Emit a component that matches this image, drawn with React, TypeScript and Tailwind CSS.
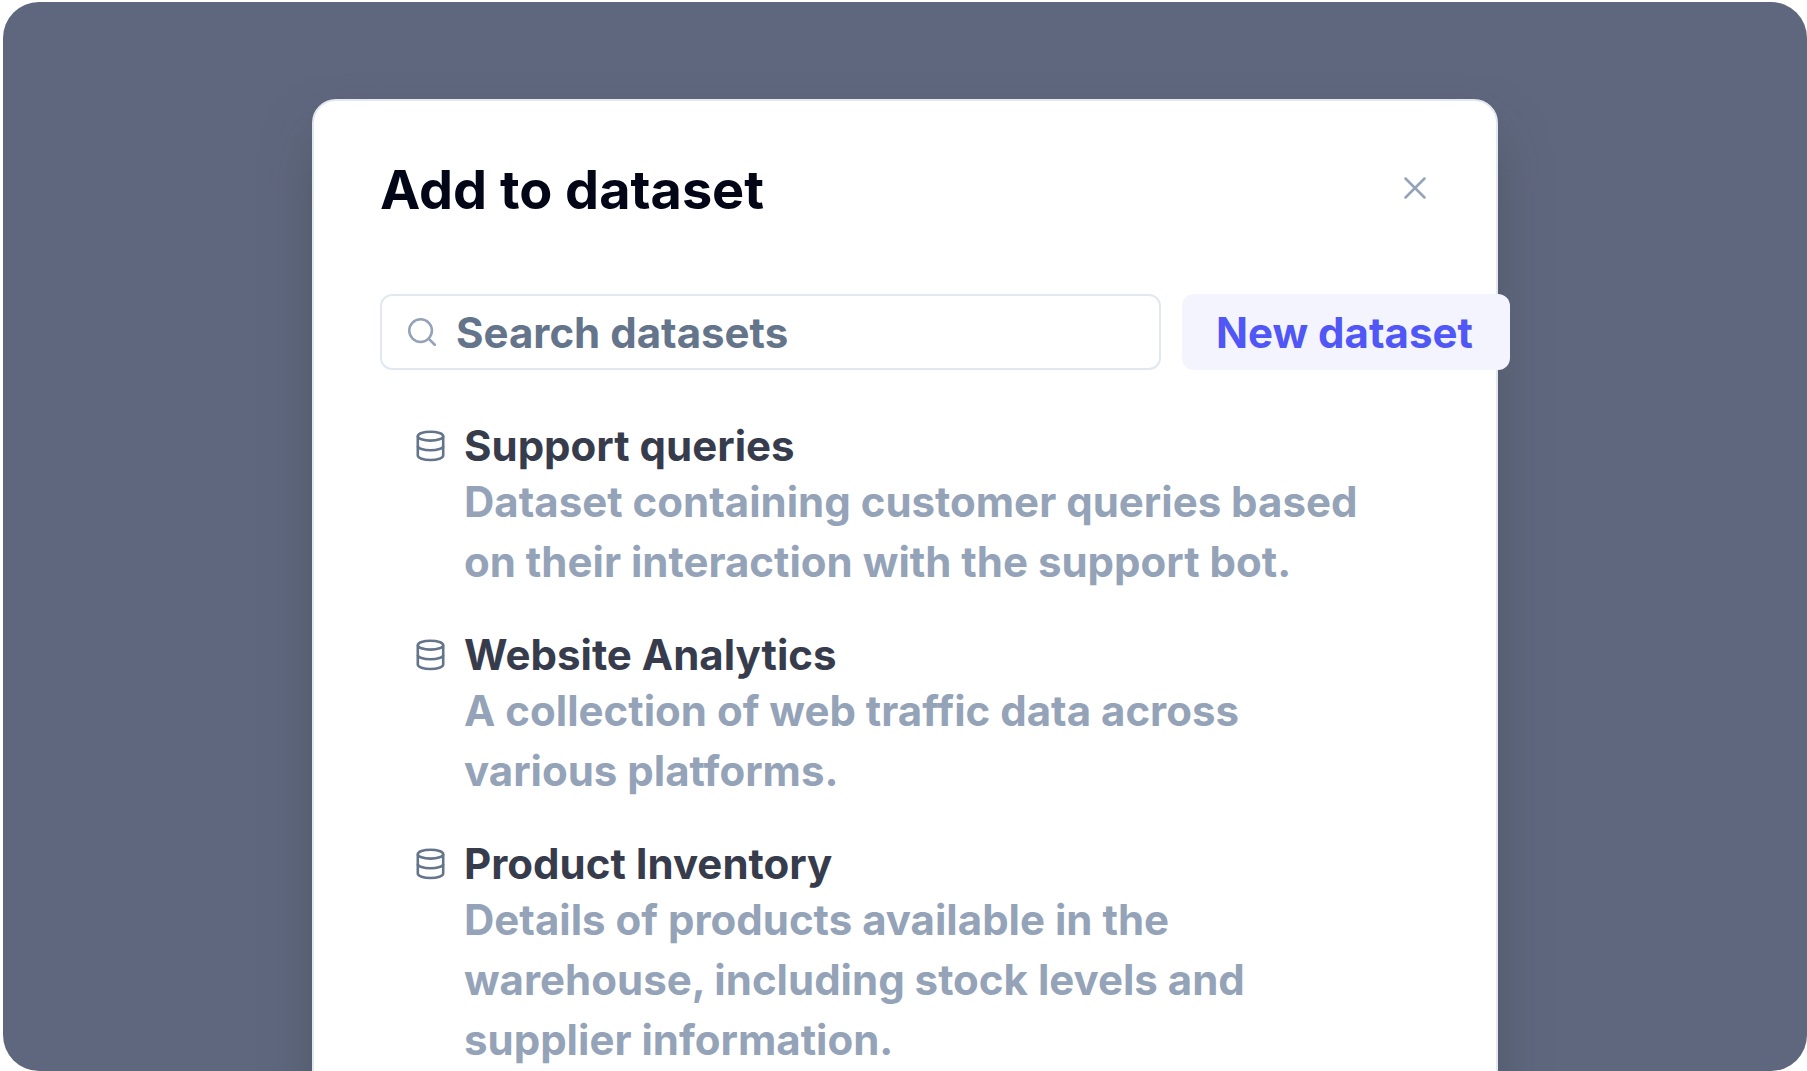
import React from "react";
import { Search, X } from "lucide-react";

const datasets = [
  { name: "Support queries", description: "Dataset containing customer queries based on their interaction with the support bot." },
  { name: "Website Analytics", description: "A collection of web traffic data across various platforms." },
  { name: "Product Inventory", description: "Details of products available in the warehouse, including stock levels and supplier information." },
];

function DatasetIcon() {
  return (
    <svg aria-hidden="true" viewBox="0 0 34 34" fill="none" stroke="currentColor" strokeWidth="2.6" className="mt-[9px] size-[34px] shrink-0 text-[#64748b]">
      <ellipse cx="16.5" cy="7.2" rx="12.7" ry="4.4" />
      <path d="M3.8 7.2v19.4c0 2.4 5.7 4.4 12.7 4.4s12.7-2 12.7-4.4V7.2" />
      <path d="M3.8 16.9c0 2.4 5.7 4.4 12.7 4.4s12.7-2 12.7-4.4" />
    </svg>
  );
}

export default function App() {
  return (
    <div className="h-screen overflow-hidden bg-white pt-0.5 pl-[3px] font-['Inter',sans-serif] [font-variant-ligatures:none]">
      <main className="flex h-full items-start justify-center overflow-hidden rounded-[36px] bg-[#5f677e] pt-[97px]">
        <section role="dialog" aria-labelledby="title" className="min-h-screen w-full max-w-[1186px] rounded-3xl border-2 border-[#e2e8f0] bg-white px-[66px] pt-14 shadow-[0_28px_56px_-12px_rgba(60,66,66,0.6)]">
          <header className="flex items-start justify-between">
            <h1 id="title" className="text-[54px] leading-[66px] font-bold text-[#020617]">Add to dataset</h1>
            <button type="button" aria-label="Close" className="mt-3 -mr-1 text-[#94a3b8]">
              <X size={38} strokeWidth={1.6} />
            </button>
          </header>
          <div className="mt-[71px] flex w-max gap-[21px]">
            <label className="flex h-[76px] w-[781px] items-center gap-[17px] rounded-xl border-2 border-[#e2e8f0] px-[23px]">
              <Search size={34} strokeWidth={1.8} className="text-[#94a3b8]" />
              <input aria-label="Search datasets" placeholder="Search datasets" className="min-w-0 flex-1 text-[42px] font-bold outline-none placeholder:text-[#64748b]" />
            </label>
            <button type="button" className="h-[76px] rounded-xl bg-[#f3f4fe] pr-[37px] pl-[34px] text-[42px] font-bold text-[#5156f6]">New dataset</button>
          </div>
          <ul className="mt-[50px] flex flex-col gap-[37px] pl-[34px]">
            {datasets.map((d) => (
              <li key={d.name} className="flex gap-4">
                <DatasetIcon />
                <div className="max-w-[920px] text-[42px] font-bold">
                  <h2 className="leading-[52px] text-[#373c4d]">{d.name}</h2>
                  <p className="leading-[60px] text-[#94a3b8]">{d.description}</p>
                </div>
              </li>
            ))}
          </ul>
        </section>
      </main>
    </div>
  );
}
